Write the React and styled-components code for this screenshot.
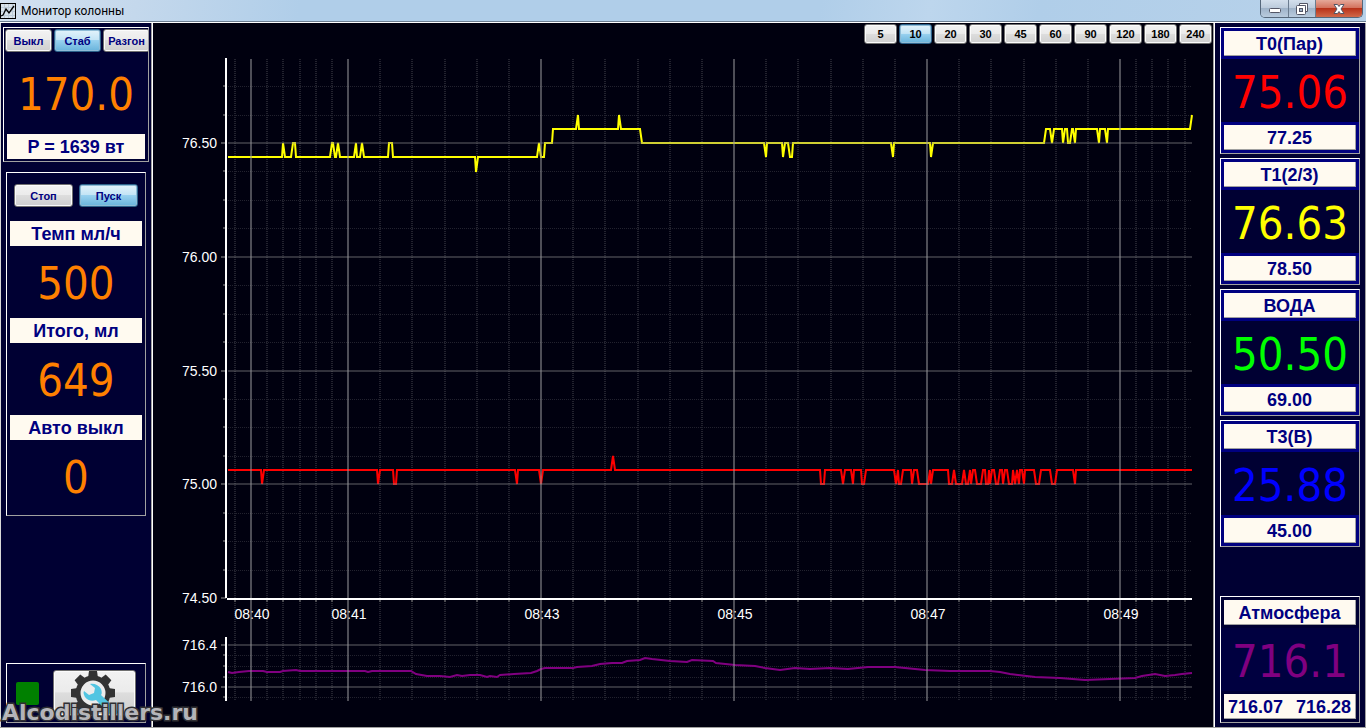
import { useState } from "react";
import styled, { createGlobalStyle } from "styled-components";

const GlobalStyle = createGlobalStyle`
    * {
        box-sizing: border-box;
    }

    body {
        margin: 0;
        background: #00000f;
        font-family: "Liberation Sans", Arial, sans-serif;
    }
`

const Window = styled.div`
    position: relative;
    display: flex;
    flex-direction: column;
    min-height: 100vh;
    border-bottom: 1px solid #a0a0a0;
`

const TitleBar = styled.header`
    display: flex;
    justify-content: space-between;
    align-items: center;
    height: 23px;
    padding-right: 3px;
    background: linear-gradient(100deg, #d3e1f0 0%, #c4d8ec 10%, #b0cee9 22%, #b0cee9 60%, #bdd6ed 68%, #b0cee9 76%, #b8d2ea 100%);
    border-bottom: 1px solid #ffffff;
    box-shadow: inset 0 -1px #6d7f92;
`

const Title = styled.h1`
    display: flex;
    align-items: center;
    gap: 5px;
    margin: 0;
    font-family: Roboto, "Open Sans", sans-serif;
    font-weight: 400;
    font-size: 12px;
    line-height: 20px;
    color: #000000;
`

const WindowButtons = styled.div`
    display: flex;
    align-self: flex-start;
    height: 18px;
    border: 1px solid #55677b;
    border-top: none;
    border-radius: 0 0 5px 5px;
    overflow: hidden;
`

const WindowButton = styled.button`
    display: flex;
    align-items: center;
    justify-content: center;
    width: ${({ $close }) => ($close ? "47px" : "27px")};
    padding: 0;
    border: none;
    border-left: ${({ $first }) => ($first ? "none" : "1px solid #6b7c8f")};
    background: ${({ $close }) => $close
        ? "linear-gradient(#e5a899 0%, #d4735f 45%, #b8321a 50%, #d0694a 100%)"
        : "linear-gradient(#d3dfec 0%, #bccbdc 45%, #9fb3c9 50%, #b9cbde 100%)"};
`

const Main = styled.main`
    display: flex;
    flex: 1;
`

const Sidebar = styled.aside`
    display: flex;
    flex-direction: column;
    flex: none;
    width: 153px;
    padding: 4px 0;
    background: #000033;
`

const LeftSidebar = styled(Sidebar)`
    padding-left: 2px;
    border-left: 1px solid #d8d8d8;
    border-right: 1px solid #ffffff;
    box-shadow: inset -1px 0 #a0a0a0;
`

const RightSidebar = styled(Sidebar)`
    gap: 4px;
    padding: 4px 5px 4px 6px;
    border-left: 1px solid #a0a0a0;
    border-right: 1px solid #a0a0a0;
    box-shadow: inset 1px 0 #ffffff;
`

const Panel = styled.section`
    border: 1px solid #ffffff;
    border-right-color: #a0a0a0;
    border-bottom-color: #a0a0a0;
`

const PowerPanel = styled(Panel)`
    width: 146px;
    padding: 1px 1px 2px;
    overflow: hidden;
`

const PumpPanel = styled(Panel)`
    width: 140px;
    margin: 10px 3px 0;
    padding: 11px 3px 3px;
`

const StatusPanel = styled(Panel)`
    display: flex;
    align-items: center;
    gap: 14px;
    width: 140px;
    height: 60px;
    margin: auto 3px 0;
    padding-left: 9px;
`

const ButtonRow = styled.div`
    display: flex;
    gap: ${({ $gap }) => $gap || "2px"};
    padding: ${({ $padding }) => $padding || "0"};
`

const Button = styled.button`
    flex: none;
    width: ${({ $width }) => $width};
    height: ${({ $height }) => $height || "23px"};
    padding: 0;
    font-family: "Liberation Sans", Arial, sans-serif;
    font-weight: 700;
    font-size: 11px;
    line-height: 16px;
    color: ${({ $color }) => $color || "#000080"};
    background: ${({ $active }) => $active
        ? "linear-gradient(#e3f3fb 0%, #c3e4f5 47%, #98d1ef 50%, #68b3db 100%)"
        : "linear-gradient(#f2f2f2 0%, #ebebeb 47%, #dddddd 50%, #cfcfcf 100%)"};
    border: 1px solid ${({ $active }) => ($active ? "#2c628b" : "#707070")};
    border-radius: 3px;
    box-shadow: inset 0 0 0 1px ${({ $active }) => ($active ? "#8fbcd6" : "#fbfbfb")};
`

const Label = styled.div`
    height: 25px;
    margin: ${({ $margin }) => $margin || "0"};
    font-weight: 700;
    font-size: 18px;
    line-height: 27px;
    text-align: center;
    white-space: nowrap;
    color: #000080;
    background: #fffaf0;
`

const SunkenLabel = styled(Label)`
    line-height: 26px;
    border-right: 1px solid #a0a0a0;
    border-bottom: 1px solid #a0a0a0;
`

const RangeLabel = styled(SunkenLabel)`
    display: flex;
    justify-content: space-between;
    padding: 0 4px;
`

const Value = styled.div`
    height: ${({ $height }) => $height || "72px"};
    padding-top: 2px;
    font-family: "DejaVu Sans Condensed", "DejaVu Sans", sans-serif;
    font-size: 45px;
    line-height: ${({ $height }) => $height || "72px"};
    text-align: center;
    white-space: nowrap;
    color: ${({ $color }) => $color || "#ff8000"};
`

const SensorPanel = styled(Panel)`
    padding: 3px;
    background: ${({ $plain }) => ($plain ? "#000033" : "#000080")};
    margin-top: ${({ $plain }) => ($plain ? "auto" : "0")};
`

const SensorValue = styled(Value)`
    margin: 3px -3px;
    background: ${({ $background }) => $background || "#000033"};
`

const Lamp = styled.div`
    width: 23px;
    height: 23px;
    background: #008000;
    border-radius: 2px;
`

const ChartArea = styled.section`
    display: flex;
    flex-direction: column;
    flex: 1;
    min-width: 0;
    background: #00000f;
`

const ChartToolbar = styled.div`
    display: flex;
    justify-content: flex-end;
    gap: 2px;
    height: 25px;
    padding: 1px 1px 0 0;
`

const Chart = styled.svg`
    display: block;
    width: 100%;
    font-family: "Liberation Sans", Arial, sans-serif;
    font-size: 14px;
`

const Watermark = styled.div`
    position: absolute;
    left: 2px;
    bottom: 1px;
    font-family: "DejaVu Sans", sans-serif;
    font-weight: 700;
    font-size: 22px;
    line-height: 26px;
    color: rgba(200, 200, 204, 0.9);
    -webkit-text-stroke: 3px #303034;
    paint-order: stroke fill;
    pointer-events: none;
`

const periods = [5, 10, 20, 30, 45, 60, 90, 120, 180, 240]

const sensors = [
    { name: "T0(Пар)", value: "75.06", limit: "77.25", color: "#ff0000" },
    { name: "T1(2/3)", value: "76.63", limit: "78.50", color: "#ffff00" },
    { name: "ВОДА", value: "50.50", limit: "69.00", color: "#00ff00" },
    { name: "T3(В)", value: "25.88", limit: "45.00", color: "#0000ff" },
]

const timeMarks = [
    [251, "08:40"], [348, "08:41"], [541, "08:43"], [734, "08:45"], [927, "08:47"], [1120, "08:49"],
]
const minorX = [
    235, 267, 283, 300, 316, 332, 380, 412, 445, 477, 509, 573, 605, 638, 670, 702,
    766, 798, 831, 863, 895, 959, 991, 1024, 1056, 1088, 1136, 1152, 1168, 1185,
]
const tempMarks = [[143, "76.50"], [257, "76.00"], [371, "75.50"], [484, "75.00"], [598, "74.50"]]
const pressureMarks = [[645, "716.4"], [687, "716.0"]]
const minorY = [86, 115, 171, 200, 228, 285, 314, 342, 399, 427, 456, 513, 541, 570, 655, 666, 677, 697]

const t1Line = `228,157 282,157 283,143 285,157 291,157 293,143 295,143 296,157 330,157 332,143 333,143
    335,157 336,157 338,143 340,157 354,157 356,143 357,157 360,157 362,143 364,157 388,157 389,143
    392,143 393,157 475,157 476,172 478,157 537,157 539,143 541,157 544,157 545,143 552,143 553,129
    576,129 578,115 579,129 618,129 619,115 621,129 640,129 642,143 764,143 766,157 767,143 782,143
    783,157 785,143 788,143 790,157 792,157 793,143 891,143 893,157 894,143 930,143 931,157 933,143
    1044,143 1046,129 1050,129 1052,143 1054,129 1062,129 1063,143 1065,129 1067,129 1068,143
    1070,143 1072,129 1073,129 1075,143 1076,129 1097,129 1099,143 1100,129 1105,129 1107,143
    1108,129 1190,129 1192,115`

const t0Line = `228,470 261,470 262,484 264,470 377,470 378,484 380,470 393,470 394,484 396,484 397,470
    515,470 517,484 518,470 539,470 541,484 543,470 611,470 613,456 615,470 820,470 821,484 824,484
    825,470 841,470 843,484 845,470 851,470 853,484 854,470 861,470 862,484 864,484 866,470 894,470
    896,484 898,470 899,484 901,484 903,470 911,470 912,484 914,470 917,470 919,484 928,484 930,470
    931,484 933,470 948,470 949,484 952,484 954,470 956,484 962,484 964,470 966,484 968,484 970,470
    971,484 973,470 975,470 977,484 981,484 983,470 985,470 986,484 988,484 989,470 990,484 992,470
    994,470 996,484 998,484 1000,470 1002,470 1003,484 1005,470 1007,470 1009,484 1012,484 1013,470
    1015,484 1017,470 1019,484 1020,470 1022,470 1024,484 1025,470 1034,470 1036,484 1039,484
    1041,470 1050,470 1052,484 1055,484 1057,470 1073,470 1075,484 1076,470 1192,470`

const pressureLine = `228,672 232,673 239,672 249,671 263,671 267,672 280,672 283,671 296,670 300,671
    365,671 368,672 372,671 411,671 416,674 427,676 440,676 450,677 457,675 462,676 470,675 480,675
    487,677 490,676 497,677 500,675 514,674 531,673 537,671 541,669 545,668 573,668 577,667 592,666
    600,664 612,663 622,663 627,661 640,660 645,658 652,659 670,661 687,662 692,660 713,661 716,663
    735,665 755,666 765,668 780,670 795,668 810,669 830,668 848,669 868,667 895,667 905,668 925,670
    950,671 973,671 990,671 1000,672 1010,674 1035,677 1060,678 1085,680 1110,679 1135,678 1142,676
    1155,674 1165,676 1175,675 1182,674 1192,673`

const ColumnChart = () => (
    <Chart viewBox="153 48 1060 679" role="img" aria-label="Температура и давление">
        {/* мелкая сетка */}
        <g stroke="#22222e">
            {minorX.map((x) => (
                <line key={x} x1={x} x2={x} y1="59" y2="701" strokeWidth="2" strokeDasharray="1 1" />
            ))}
            {minorY.map((y) => (
                <line key={y} x1="228" x2="1192" y1={y + 0.5} y2={y + 0.5} strokeDasharray="1 1" />
            ))}
        </g>

        {/* риски осей */}
        <g stroke="#4a4a50" strokeWidth="2">
            {minorY.map((y) => <line key={y} x1="223" x2="226" y1={y} y2={y} />)}
            {[...tempMarks, ...pressureMarks].map(([y]) => <line key={y} x1="221" x2="226" y1={y} y2={y} />)}
            {minorX.map((x) => <line key={x} x1={x} x2={x} y1="600" y2="602" />)}
        </g>

        <g fill="#ffffff">
            {[...tempMarks, ...pressureMarks].map(([y, text]) => (
                <text key={text} x="217" y={y + 5} textAnchor="end">{text}</text>
            ))}
            {timeMarks.map(([x, text]) => (
                <text key={text} x={x + 1} y="619" textAnchor="middle">{text}</text>
            ))}
        </g>

        <g fill="none" strokeWidth="2">
            <polyline points={t1Line} stroke="#ffff00" />
            <polyline points={t0Line} stroke="#ff0000" />
            <polyline points={pressureLine} stroke="#800080" />
        </g>

        {/* основная сетка поверх графиков */}
        <g strokeWidth="2">
            {[...tempMarks.slice(0, 4), ...pressureMarks].map(([y]) => (
                <line key={y} x1="228" x2="1192" y1={y} y2={y} stroke="rgba(128, 128, 132, 0.38)" />
            ))}
            {timeMarks.map(([x]) => (
                <line key={x} x1={x} x2={x} y1="59" y2="701" stroke="rgba(150, 150, 154, 0.52)" />
            ))}
        </g>

        <g stroke="#ffffff" strokeWidth="2">
            <line x1="226" x2="226" y1="58" y2="598" />
            <line x1="227" x2="1192" y1="599" y2="599" />
            <line x1="226" x2="226" y1="637" y2="701" />
        </g>
    </Chart>
)

const AppIcon = () => (
    <svg width="16" height="16" viewBox="0 0 16 16" aria-hidden="true">
        <rect x="0.5" y="0.5" width="15" height="15" fill="#d8e2ea" stroke="#000000" />
        <path d="M4.5 1v14M8.5 1v14M12.5 1v14M1 4.5h14M1 8.5h14M1 12.5h14" stroke="#bccbd8" />
        <path d="M1 13L3 12L6 6L9 10L14 3" fill="none" stroke="#000000" strokeWidth="1.3" />
    </svg>
)

const GearIcon = () => (
    <svg width="52" height="46" viewBox="0 0 52 46" aria-hidden="true">
        <g transform="translate(25 22)">
            <g fill="#333333">
                {[0, 45, 90, 135, 180, 225, 270, 315].map((angle) => (
                    <path key={angle} d="M-5 -15L-4 -22H4L5 -15Z" transform={`rotate(${angle})`} />
                ))}
            </g>
            <circle r="15" fill="#ececec" stroke="#333333" strokeWidth="5" />
            <path
                d="M-3 -9C1 -10 6 -8 8 -4C9 -1 9 1 8 2L26 19L20 24L3 7C-1 9 -6 7 -8 4C-9 2 -10 0 -9 -2L-4 2L1 0L2 -5Z"
                fill="#52c5e2"
            />
        </g>
    </svg>
)

const SettingsButton = styled(Button)`
    display: flex;
    justify-content: center;
    padding-right: 2px;
    overflow: hidden;
`

const App = () => {
    const [mode, setMode] = useState("Стаб")
    const [pump, setPump] = useState("Пуск")
    const [period, setPeriod] = useState(10)

    return (
        <Window>
            <GlobalStyle />
            <TitleBar>
                <Title><AppIcon />Монитор колонны</Title>
                <WindowButtons>
                    <WindowButton $first aria-label="Свернуть">
                        <svg width="14" height="14" viewBox="0 0 14 14">
                            <rect x="1.5" y="6.5" width="11" height="4" rx="1" fill="#ffffff" stroke="#535666" />
                        </svg>
                    </WindowButton>
                    <WindowButton aria-label="Развернуть">
                        <svg width="14" height="14" viewBox="0 0 14 14">
                            <path d="M4.5 1.5H12.5V9.5H10.5V3.5H4.5Z" fill="#ffffff" stroke="#535666" />
                            <rect x="1.5" y="3.5" width="9" height="9" rx="1" fill="#ffffff" stroke="#535666" />
                            <rect x="4.5" y="6.5" width="3" height="3" fill="#9fb3c9" stroke="#535666" />
                        </svg>
                    </WindowButton>
                    <WindowButton $close aria-label="Закрыть">
                        <svg width="14" height="14" viewBox="0 0 14 14">
                            <path
                                d="M2 2.5H5.5L7 4.5L8.5 2.5H12L9 7L12 11.5H8.5L7 9.5L5.5 11.5H2L5 7Z"
                                fill="#ffffff"
                                stroke="#535666"
                            />
                        </svg>
                    </WindowButton>
                </WindowButtons>
            </TitleBar>

            <Main>
                <LeftSidebar>
                    <PowerPanel>
                        <ButtonRow>
                            {["Выкл", "Стаб", "Разгон"].map((name) => (
                                <Button
                                    key={name}
                                    $width="47px"
                                    $active={mode === name}
                                    aria-pressed={mode === name}
                                    onClick={() => setMode(name)}
                                >
                                    {name}
                                </Button>
                            ))}
                        </ButtonRow>
                        <Value $height="82px">170.0</Value>
                        <Label $margin="0 2px">P = 1639 вт</Label>
                    </PowerPanel>

                    <PumpPanel>
                        <ButtonRow $gap="6px" $padding="0 4px 14px">
                            {["Стоп", "Пуск"].map((name) => (
                                <Button
                                    key={name}
                                    $width="59px"
                                    $active={pump === name}
                                    aria-pressed={pump === name}
                                    onClick={() => setPump(name)}
                                >
                                    {name}
                                </Button>
                            ))}
                        </ButtonRow>
                        <Label>Темп мл/ч</Label>
                        <Value>500</Value>
                        <Label>Итого, мл</Label>
                        <Value>649</Value>
                        <Label>Авто выкл</Label>
                        <Value>0</Value>
                    </PumpPanel>

                    <StatusPanel>
                        <Lamp />
                        <SettingsButton $width="83px" $height="46px" aria-label="Настройки">
                            <GearIcon />
                        </SettingsButton>
                    </StatusPanel>
                </LeftSidebar>

                <ChartArea>
                    <ChartToolbar>
                        {periods.map((minutes) => (
                            <Button
                                key={minutes}
                                $width="33px"
                                $height="20px"
                                $color="#000000"
                                $active={period === minutes}
                                aria-pressed={period === minutes}
                                onClick={() => setPeriod(minutes)}
                            >
                                {minutes}
                            </Button>
                        ))}
                    </ChartToolbar>
                    <ColumnChart />
                </ChartArea>

                <RightSidebar>
                    {sensors.map(({ name, value, limit, color }) => (
                        <SensorPanel key={name}>
                            <SunkenLabel>{name}</SunkenLabel>
                            <SensorValue $height="63px" $color={color}>{value}</SensorValue>
                            <SunkenLabel>{limit}</SunkenLabel>
                        </SensorPanel>
                    ))}
                    <SensorPanel $plain>
                        <SunkenLabel>Атмосфера</SunkenLabel>
                        <SensorValue $height="63px" $color="#800080" $background="#000040">716.1</SensorValue>
                        <RangeLabel>
                            <span>716.07</span>
                            <span>716.28</span>
                        </RangeLabel>
                    </SensorPanel>
                </RightSidebar>
            </Main>
            <Watermark>Alcodistillers.ru</Watermark>
        </Window>
    )
}

export default App
